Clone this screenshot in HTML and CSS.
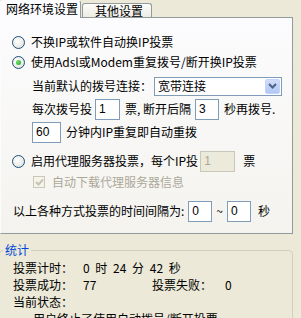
FILE: index.html
```html
<!DOCTYPE html>
<html lang="zh-CN">
<head>
    <meta charset="UTF-8">
    <title>网络环境设置</title>
    <link rel="stylesheet" href="styles.css">
</head>
<body>
    <div class="tabs">
        <span class="tab tab-active">网络环境设置</span>
        <span class="tab">其他设置</span>
    </div>
    <div class="panel">
        <div class="row row-radio1"><span class="radio"></span>不换IP或软件自动换IP投票</div>
        <div class="row row-radio2"><span class="radio radio-on"></span>使用Adsl或Modem重复拨号/断开换IP投票</div>
        <div class="row row-select sub">
            当前默认的拨号连接：
            <span class="select">宽带连接<span class="select-btn"><svg width="9" height="6" viewBox="0 0 9 6"><path d="M1 1 L4.5 4.5 L8 1" fill="none" stroke="#4d6185" stroke-width="2"/></svg></span></span>
        </div>
        <div class="row row-dial sub">
            每次拨号投<input class="box box-1" type="text" value="1">票, 断开后隔<input class="box box-3" type="text" value="3">秒再拨号.
        </div>
        <div class="row row-repeat sub">
            <input class="box box-60" type="text" value="60">分钟内IP重复即自动重拨
        </div>
        <div class="row row-proxy"><span class="radio"></span>启用代理服务器投票，每个IP投<input class="box box-proxy" type="text" value="1" disabled>票</div>
        <div class="row row-check sub disabled"><span class="check"><svg width="9" height="8" viewBox="0 0 9 8"><path d="M1 4 L3.5 6.5 L8 1.5" fill="none" stroke="#c5c3b6" stroke-width="2"/></svg></span>自动下载代理服务器信息</div>
        <div class="row row-interval">
            以上各种方式投票的时间间隔为:<input class="box box-from" type="text" value="0">~<input class="box box-to" type="text" value="0">秒
        </div>
    </div>

    <fieldset class="stats">
        <legend>统计</legend>
        <div class="stats-body">
            <span>投票计时：</span><span class="wide">0 时 24 分 42 秒</span>
            <span>投票成功：</span><span>77</span><span>投票失败：</span><span>0</span>
            <span class="full">当前状态：</span>
            <span class="full status">用户终止了使用自动拨号/断开投票.</span>
        </div>
    </fieldset>
</body>
</html>
```

FILE: styles.css
```css
body {
    margin: 0;
    background-color: #ece9d8;
    font-family: "Noto Sans CJK SC", sans-serif;
    font-size: 12px;
    line-height: 14px;
    color: #000;
    overflow: hidden;
}
.tabs {
    display: flex;
    height: 18px;
    margin-bottom: -1px;
}
.tab {
    box-sizing: border-box;
    margin-top: 3px;
    margin-left: 1px;
    width: 70px;
    height: 14px;
    padding-left: 12px;
    line-height: 14px;
    background: linear-gradient(#fdfdfb, #ecebe4);
    border: 1px solid #919b9c;
    border-bottom: none;
    border-radius: 3px 3px 0 0;
}
.tab-active {
    position: relative;
    z-index: 1;
    margin: 0;
    width: 81px;
    height: 18px;
    padding-left: 5px;
    line-height: 16px;
    background: #fcfcfe;
    border-color: #fcfcfe #919b9c #fcfcfe #fcfcfe;
}
.panel {
    box-sizing: border-box;
    width: 293px;
    height: 217px;
    padding-top: 14px;
    background: linear-gradient(#fcfcfe, #f4f3ee);
    border: 1px solid #919b9c;
    border-left-color: #fcfcfe;
}
.row {
    display: flex;
    align-items: center;
    height: 20px;
    white-space: nowrap;
}
.row-radio1, .row-radio2, .row-proxy {
    padding-left: 11px;
}
.sub {
    padding-left: 31px;
}
.row-select { margin-top: 4px; }
.row-dial { margin-top: 2px; height: 22px; }
.row-repeat { margin-top: 1px; height: 22px; }
.row-proxy { margin-top: 7px; height: 22px; }
.row-check { padding-left: 32px; }
.row-interval { margin-top: 8px; height: 22px; padding-left: 12px; }

.radio {
    box-sizing: border-box;
    width: 13px;
    height: 13px;
    margin-right: 6px;
    border: 1px solid #1c5180;
    border-radius: 50%;
    background: radial-gradient(circle at 40% 40%, #ffffff, #dcdcd4);
    display: flex;
    align-items: center;
    justify-content: center;
}
.radio-on::after {
    content: "";
    width: 5px;
    height: 5px;
    border-radius: 50%;
    background: radial-gradient(circle at 35% 35%, #6fe36a, #21a121);
}
.select {
    box-sizing: border-box;
    display: flex;
    align-items: center;
    width: 128px;
    height: 19px;
    margin-left: 2px;
    padding: 1px 1px 1px 3px;
    border: 1px solid #7f9db9;
    background: #fff;
}
.select-btn {
    margin-left: auto;
    width: 15px;
    height: 15px;
    display: flex;
    align-items: center;
    justify-content: center;
    background: linear-gradient(#d0ddfb, #b2c7f5);
    border: 1px solid #c3d3fd;
    box-sizing: border-box;
    border-radius: 2px;
}
.box {
    box-sizing: border-box;
    height: 21px;
    padding: 0 0 0 3px;
    margin: 0 5px 0 3px;
    border: 1px solid #7f9db9;
    background: #fff;
    font-family: "Liberation Sans", sans-serif;
    font-size: 12px;
    color: #000;
}
.box-1 { width: 25px; }
.box-3 { width: 24px; margin-left: 4px; }
.box-60 { width: 29px; margin-left: 0; margin-right: 5px; }
.box-proxy {
    width: 35px;
    margin-left: 2px;
    margin-right: 8px;
    background: #ebeadb;
    border-color: #c9c7ba;
    color: #aca899;
}
.box-from { width: 24px; margin-left: 4px; margin-right: 4px; }
.box-to { width: 24px; margin-left: 4px; margin-right: 7px; }
.disabled {
    color: #aca899;
}
.check {
    box-sizing: border-box;
    width: 12px;
    height: 12px;
    margin-right: 7px;
    border: 1px solid #c9c7ba;
    background: #f5f4ea;
    display: flex;
    align-items: center;
    justify-content: center;
}
.stats {
    margin: 9px 8px 0 -1px;
    padding: 0;
    border: 1px solid #d0d0bf;
    border-radius: 4px;
    min-width: 0;
}
.stats legend {
    margin-left: 3px;
    padding: 0 2px;
    color: #0046d5;
    line-height: 14px;
}
.stats-body {
    display: grid;
    grid-template-columns: 70px 69px 73px auto;
    padding: 2px 0 0 13px;
    line-height: 17px;
    white-space: pre;
}
.wide {
    grid-column: span 3;
    word-spacing: 3px;
}
.full { grid-column: 1 / -1; }
.status { padding-left: 20px; }
```
